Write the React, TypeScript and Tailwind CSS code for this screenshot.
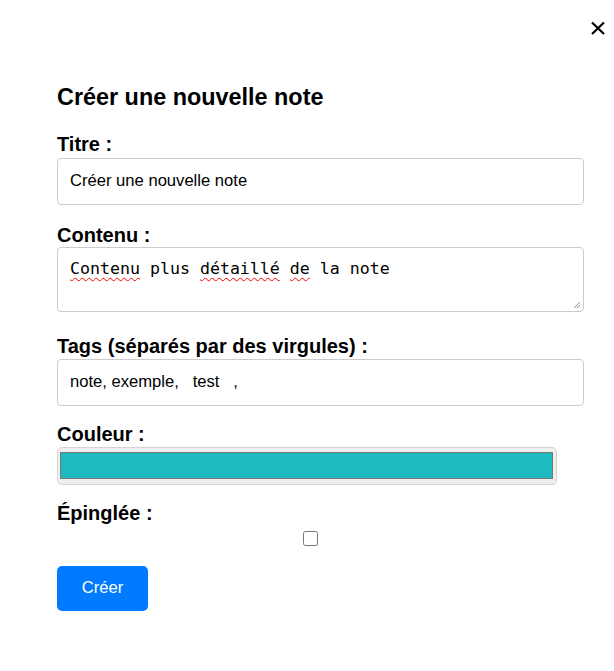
import React from "react";

export default function App() {
  return (
    <div className="relative w-[614px] h-[671px] bg-white text-black" style={{ fontFamily: '"Liberation Sans", Arial, sans-serif' }}>
      <button className="absolute left-[589px] top-[18px] w-[18px] h-[20px] flex items-center justify-center">
        <svg width="16" height="16" viewBox="0 0 16 16">
          <path d="M2 2.5 L14 14 M14 2.5 L2 14" stroke="#000" strokeWidth="2.2" />
        </svg>
      </button>
      <div className="pl-[57px] pr-[30px] pt-[83px]">
        <h2 className="text-[23.4px] leading-[28px] font-bold">Créer une nouvelle note</h2>
        <div className="w-[527px] mt-[22px]">
          <label className="block text-[20px] leading-[23px] font-bold">Titre :</label>
          <div className="mt-[2px] h-[47px] border border-[#cccccc] rounded-[4px] px-[12px] flex items-center text-[16.6px]">
            Créer une nouvelle note
          </div>
          <label className="block mt-[19px] text-[20px] leading-[23px] font-bold">Contenu :</label>
          <div className="relative mt-[0px] h-[65px] border border-[#cccccc] rounded-[4px] px-[12px] pt-[9px] text-[16.6px]" style={{ fontFamily: '"DejaVu Sans Mono", monospace' }}>
            <span className="underline decoration-wavy decoration-[#ff0000] decoration-[1px] underline-offset-[3px]">Contenu</span>{" "}plus{" "}
            <span className="underline decoration-wavy decoration-[#ff0000] decoration-[1px] underline-offset-[3px]">détaillé</span>{" "}
            <span className="underline decoration-wavy decoration-[#ff0000] decoration-[1px] underline-offset-[3px]">de</span>{" "}la note
            <svg className="absolute right-[2px] bottom-[2px]" width="8" height="8" viewBox="0 0 8 8">
              <path d="M7 1 L1 7 M7 4 L4 7" stroke="#888" strokeWidth="1" />
            </svg>
          </div>
          <label className="block mt-[23px] text-[20px] leading-[23px] font-bold">Tags (séparés par des virgules) :</label>
          <div className="mt-[1px] h-[47px] border border-[#cccccc] rounded-[4px] px-[12px] flex items-center text-[16.6px] whitespace-pre">
            {"note, exemple,   test   ,"}
          </div>
          <label className="block mt-[17px] text-[20px] leading-[23px] font-bold">Couleur :</label>
          <div className="mt-[1px] w-[500px] h-[38px] border border-[#d4d4d4] rounded-[5px] bg-[#efefef] pl-[2px] pr-[3px] pt-[4px] pb-[5px]">
            <div className="w-full h-full bg-[#1dbbbf] border border-[#777777]" />
          </div>
          <label className="block mt-[17px] text-[20px] leading-[23px] font-bold">Épinglée :</label>
          <div className="mt-[6px] ml-[246px] flex">
            <input type="checkbox" className="m-0 w-[15px] h-[15px]" readOnly />
          </div>
          <button className="mt-[20px] w-[91px] h-[45px] rounded-[5px] bg-[#007bff] text-white text-[16.6px]">Créer</button>
        </div>
      </div>
    </div>
  );
}
